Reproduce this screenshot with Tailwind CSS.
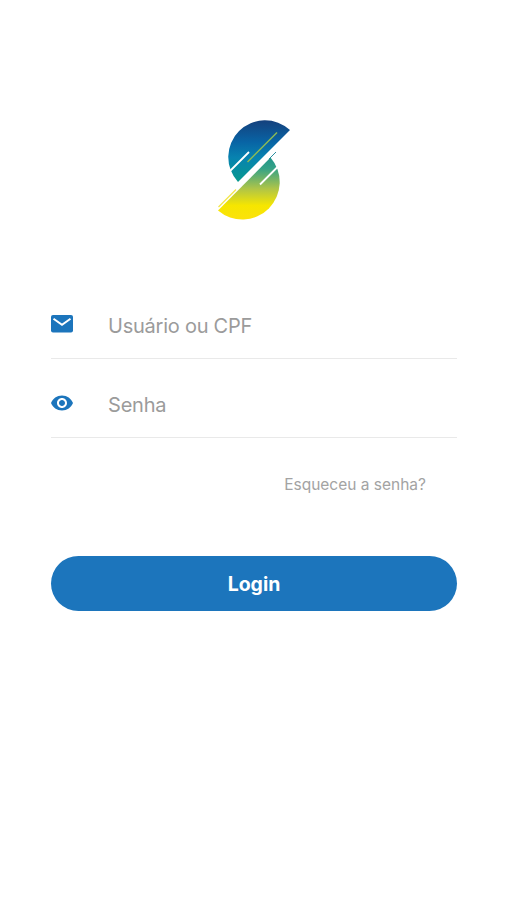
<!DOCTYPE html>
<html lang="pt-BR">
<head>
    <meta charset="UTF-8">
    <meta name="viewport" content="width=device-width, initial-scale=1.0">
    <script src="https://cdn.jsdelivr.net/npm/@tailwindcss/browser@4"></script>
    <title>Login</title>
</head>
<body class="bg-white font-['Inter',sans-serif]">

    <main class="min-h-screen pl-[51px] pr-[50px] pt-[118px]">
        <!-- Logo -->
        <svg class="block w-[80px] h-[104px] ml-[163px]" viewBox="214 118 80 104" fill="none">
            <defs>
                <linearGradient id="top" gradientUnits="userSpaceOnUse" x1="0" y1="120" x2="0" y2="183">
                    <stop offset="0" stop-color="#15407c"/>
                    <stop offset=".35" stop-color="#0864a5"/>
                    <stop offset=".6" stop-color="#0783b0"/>
                    <stop offset="1" stop-color="#079a8c"/>
                </linearGradient>
                <linearGradient id="bottom" gradientUnits="userSpaceOnUse" x1="0" y1="152" x2="0" y2="219">
                    <stop offset="0" stop-color="#168f8e"/>
                    <stop offset=".25" stop-color="#37a386"/>
                    <stop offset=".55" stop-color="#b0c547"/>
                    <stop offset=".8" stop-color="#f6e600"/>
                    <stop offset="1" stop-color="#fbe20b"/>
                </linearGradient>
            </defs>
            <path fill="url(#top)" d="M290 130 238 182A36.800 36.800 0 0 1 290 130Z"/>
            <path fill="url(#bottom)" d="M218 210.500 270.500 157.500A37.400 37.400 0 0 1 218 210.500Z"/>
            <path stroke="#2d8ea0" stroke-width="1" d="M269 159 276 152"/>
            <path stroke="#f3e64a" stroke-width="1.200" d="M218.500 207 236 189.500"/>
            <path stroke="#fff" stroke-width="1.800" d="M229 172 249 152M260 184.500 279 165.500"/>
            <path stroke="#8dbb55" stroke-width="1.400" d="M247.500 162 277 132.500"/>
        </svg>

        <form>
            <label class="flex items-center h-[68px] mt-[69px] pt-0.5 border-b border-[#e9e9e9]">
                <svg class="w-[22px] h-[18px] mb-1" viewBox="0 0 22 18">
                    <rect width="22" height="17.5" rx="2" fill="#1c75bc"/>
                    <path d="m2.500 3.800 8.500 6L19.500 3.800" fill="none" stroke="#fff" stroke-width="2"/>
                </svg>
                <input type="text" placeholder="Usuário ou CPF" class="ml-[35px] w-[300px] text-[20px] tracking-[-0.24px] text-[#9b9b9b] placeholder:text-[#9b9b9b] outline-none">
            </label>
            <label class="flex items-center h-[68px] mt-[11px] pt-0.5 border-b border-[#e9e9e9]">
                <svg class="w-[22px] h-[22px] mb-1" viewBox="1 1 22 22" fill="#1c75bc">
                    <path d="M12 4.500C7 4.500 2.730 7.610 1 12c1.730 4.390 6 7.500 11 7.500s9.270-3.110 11-7.500c-1.730-4.390-6-7.500-11-7.500zM12 17c-2.760 0-5-2.240-5-5s2.240-5 5-5 5 2.240 5 5-2.240 5-5 5zm0-8c-1.660 0-3 1.340-3 3s1.340 3 3 3 3-1.340 3-3-1.340-3-3-3z"/>
                </svg>
                <input type="password" placeholder="Senha" class="ml-[35px] w-[300px] text-[20px] tracking-[-0.2px] text-[#9b9b9b] placeholder:text-[#9b9b9b] outline-none">
            </label>

            <a href="#" class="block w-fit ml-auto mr-[31px] mt-[35px] text-[15.5px] leading-6 text-[#a3a3a3]">Esqueceu a senha?</a>

            <button type="submit" class="block w-full h-[55px] mt-[59px] pt-0.5 rounded-full bg-[#1c75bc] text-[19.5px] font-bold text-white">Login</button>
        </form>
    </main>

</body>
</html>
